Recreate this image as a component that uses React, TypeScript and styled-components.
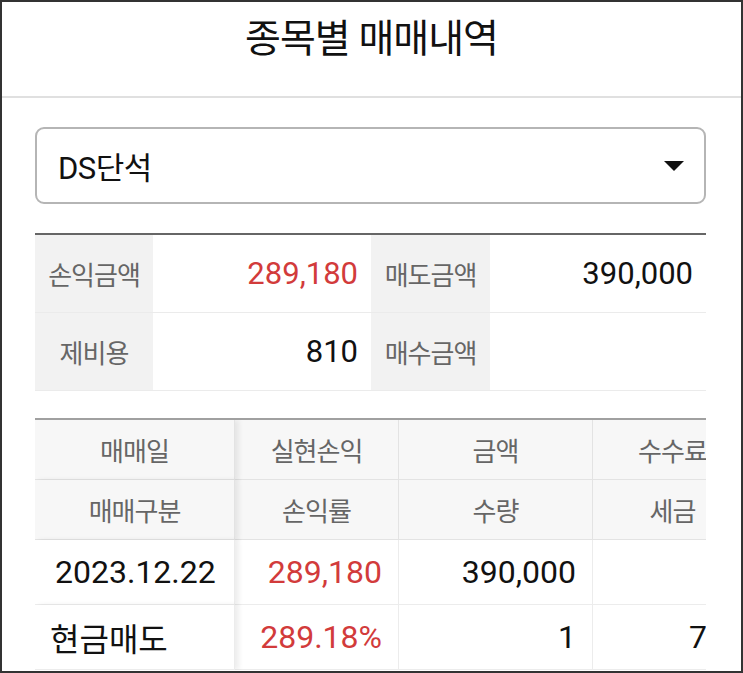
import React from 'react'
import styled, { createGlobalStyle } from 'styled-components'

const GlobalStyle = createGlobalStyle`
  html, body { margin: 0; padding: 0; background: #fff; }
  body { font-family: Roboto, "Noto Sans CJK KR", sans-serif; }
`

const Frame = styled.div`
  width: 743px;
  height: 673px;
  box-sizing: border-box;
  border: 2px solid #333;
  overflow: hidden;
  background: #fff;
`

const Header = styled.header`
  height: 96px;
  box-sizing: border-box;
  padding-top: 5px;
  border-bottom: 2px solid #e0e0e0;
  text-align: center;
`

const Title = styled.h1`
  margin: 0;
  font-size: 39px;
  font-weight: 400;
  color: #111;
  letter-spacing: -1px;
`

const Body = styled.main`
  padding: 29px 35px 0 33px;
`

const Select = styled.div`
  height: 77px;
  box-sizing: border-box;
  border: 2px solid #b5b5b5;
  border-radius: 9px;
  display: flex;
  align-items: center;
  justify-content: space-between;
  padding: 0 20px 0 21px;
  font-size: 31px;
  color: #111;
  letter-spacing: -0.5px;
`

const Caret = styled.span`
  width: 0;
  height: 0;
  border-left: 10px solid transparent;
  border-right: 10px solid transparent;
  border-top: 10px solid #111;
`

const Summary = styled.div`
  margin-top: 29px;
  border-top: 2px solid #666;
  display: grid;
  grid-template-columns: 118px 218px 119px 1fr;
`

const SumLabel = styled.div`
  height: 77px;
  background: #f2f2f2;
  color: #666;
  font-size: 26px;
  letter-spacing: -1px;
  display: flex;
  align-items: center;
  justify-content: center;
  border-bottom: 1px solid #ebebeb;
`

const SumValue = styled.div<{ $red?: boolean }>`
  height: 77px;
  color: ${p => (p.$red ? '#d23b3b' : '#111')};
  font-size: 31px;
  display: flex;
  align-items: center;
  justify-content: flex-end;
  padding-right: 13px;
  border-bottom: 1px solid #ebebeb;
`

const Scroller = styled.div`
  margin-top: 27px;
  width: 671px;
  overflow: hidden;
  border-top: 2px solid #a0a0a0;
`

const Grid = styled.div`
  display: grid;
  grid-template-columns: 200px 164px 194px 160px;
  width: max-content;
`

const HeadCell = styled.div<{ $first?: boolean }>`
  height: 60px;
  box-sizing: border-box;
  background: #f7f7f7;
  color: #666;
  font-size: 26px;
  letter-spacing: -1px;
  display: flex;
  align-items: center;
  justify-content: center;
  border-bottom: 1px solid #e3e3e3;
  border-right: 1px solid #e3e3e3;
  position: relative;
  ${p => p.$first && 'box-shadow: 4px 0 5px rgba(0,0,0,0.07); z-index: 1;'}
`

const DataCell = styled.div<{ $align: 'left' | 'right'; $red?: boolean; $first?: boolean; $pad?: number }>`
  height: 65px;
  box-sizing: border-box;
  color: ${p => (p.$red ? '#d23b3b' : '#111')};
  font-size: 32px;
  display: flex;
  align-items: center;
  justify-content: ${p => (p.$align === 'left' ? 'flex-start' : 'flex-end')};
  padding: ${p => (p.$align === 'left' ? `0 0 0 ${p.$pad ?? 18}px` : `0 ${p.$pad ?? 16}px 0 0`)};
  border-bottom: 1px solid #ececec;
  border-right: 1px solid #ececec;
  background: #fff;
  position: relative;
  ${p => p.$first && 'box-shadow: 4px 0 5px rgba(0,0,0,0.07); z-index: 1;'}
`

const headRows = [
  ['매매일', '실현손익', '금액', '수수료'],
  ['매매구분', '손익률', '수량', '세금'],
]

type Cell = { t: string; a: 'left' | 'right'; red?: boolean; pad?: number }

const dataRows: Cell[][] = [
  [
    { t: '2023.12.22', a: 'left', pad: 20 },
    { t: '289,180', a: 'right', red: true },
    { t: '390,000', a: 'right' },
    { t: '', a: 'right', pad: 45 },
  ],
  [
    { t: '현금매도', a: 'left', pad: 15 },
    { t: '289.18%', a: 'right', red: true },
    { t: '1', a: 'right' },
    { t: '7', a: 'right', pad: 45 },
  ],
]

export default function App() {
  return (
    <Frame>
      <GlobalStyle />
      <Header>
        <Title>종목별 매매내역</Title>
      </Header>
      <Body>
        <Select>
          <span>DS단석</span>
          <Caret />
        </Select>

        <Summary>
          <SumLabel>손익금액</SumLabel>
          <SumValue $red>289,180</SumValue>
          <SumLabel>매도금액</SumLabel>
          <SumValue>390,000</SumValue>
          <SumLabel>제비용</SumLabel>
          <SumValue>810</SumValue>
          <SumLabel>매수금액</SumLabel>
          <SumValue></SumValue>
        </Summary>

        <Scroller>
          <Grid>
            {headRows.map((row, ri) =>
              row.map((h, ci) => (
                <HeadCell key={`h${ri}-${ci}`} $first={ci === 0}>
                  {h}
                </HeadCell>
              ))
            )}
            {dataRows.map((row, ri) =>
              row.map((c, ci) => (
                <DataCell
                  key={`d${ri}-${ci}`}
                  $align={c.a}
                  $red={c.red}
                  $pad={c.pad}
                  $first={ci === 0}
                >
                  {c.t}
                </DataCell>
              ))
            )}
          </Grid>
        </Scroller>
      </Body>
    </Frame>
  )
}
